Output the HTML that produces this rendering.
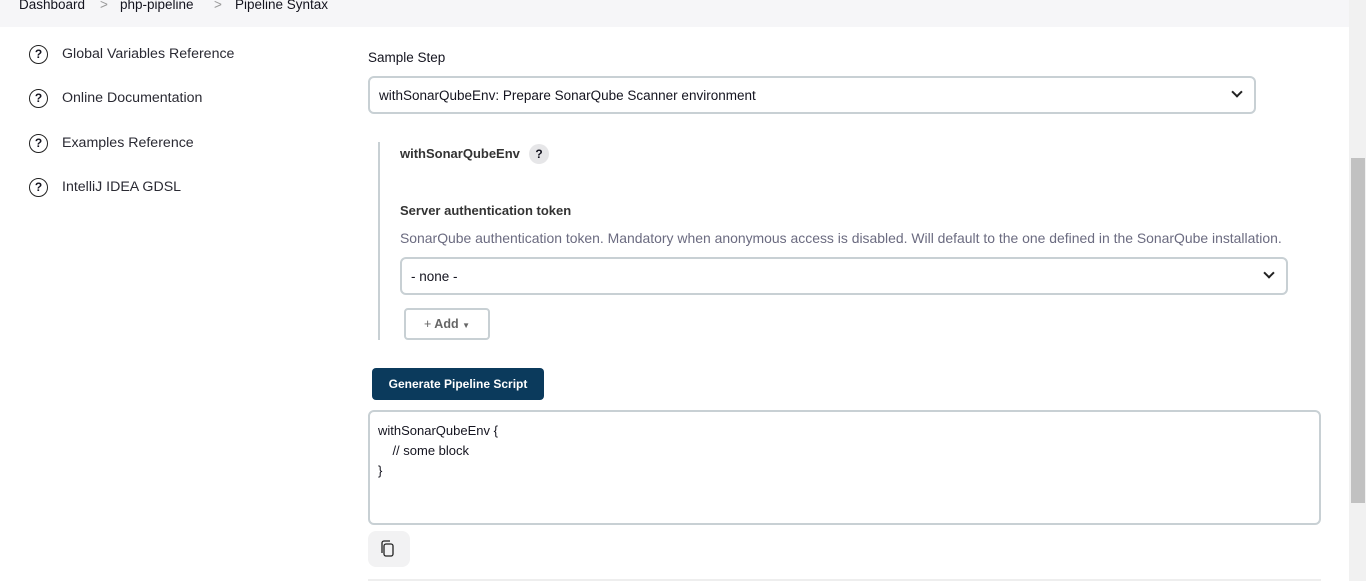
<!DOCTYPE html>
<html><head><meta charset="utf-8"><style>
*{box-sizing:border-box;margin:0;padding:0}
body{width:1366px;height:581px;overflow:hidden;background:#fff;font-family:"Liberation Sans",sans-serif;font-size:13.5px;color:#14141f;position:relative}
.bc{position:absolute;left:0;top:0;width:1349px;height:27px;background:#f6f6f8;font-size:13.5px}
.bc span{position:absolute;top:-3px}
.sep{color:#999}
.side{position:absolute;left:29px}
.side .q{position:absolute;left:0;top:0;width:19px;height:19px;border:1.7px solid #222;border-radius:50%;font-size:12px;font-weight:bold;text-align:center;line-height:16px}
.side .t{position:absolute;left:33px;top:1px;white-space:nowrap;color:#2a2a33;font-size:14.2px}
.abs{position:absolute;white-space:nowrap}
.sel{position:absolute;border:2px solid #c8d0d4;border-radius:6px;background:#fff}
.chev{position:absolute;width:8px;height:8px;border-right:2px solid #222;border-bottom:2px solid #222;transform:rotate(45deg)}
.sb{position:absolute;left:1349px;top:0;width:17px;height:581px;background:#f1f1f1}
.thumb{position:absolute;left:1351px;top:158px;width:14px;height:345px;background:#c1c1c1}
</style></head><body>
<div class="bc">
<span style="left:19px">Dashboard</span><span class="sep" style="left:100px">&gt;</span>
<span style="left:120px">php-pipeline</span><span class="sep" style="left:214px">&gt;</span>
<span style="left:235px">Pipeline Syntax</span>
</div>
<div class="side" style="top:45px"><div class="q">?</div><div class="t">Global Variables Reference</div></div>
<div class="side" style="top:89px"><div class="q">?</div><div class="t">Online Documentation</div></div>
<div class="side" style="top:134px"><div class="q">?</div><div class="t">Examples Reference</div></div>
<div class="side" style="top:178px"><div class="q">?</div><div class="t">IntelliJ IDEA GDSL</div></div>

<div class="abs" style="left:368px;top:50px">Sample Step</div>
<div class="sel" style="left:368px;top:76px;width:888px;height:38px"><div class="abs" style="left:9px;top:10px">withSonarQubeEnv: Prepare SonarQube Scanner environment</div><div class="chev" style="left:863px;top:10px"></div></div>

<div style="position:absolute;left:378px;top:142px;width:2px;height:198px;background:#c8d0d4"></div>
<div class="abs" style="left:400px;top:146px;font-weight:bold;color:#333;font-size:13px">withSonarQubeEnv</div>
<div class="abs" style="left:529px;top:144px;width:20px;height:20px;border-radius:50%;background:#e6e6e8;font-size:12px;font-weight:bold;text-align:center;line-height:20px">?</div>
<div class="abs" style="left:400px;top:203px;font-weight:bold;color:#333;font-size:13px">Server authentication token</div>
<div class="abs" style="left:400px;top:230px;color:#6b6b80;font-size:13.95px">SonarQube authentication token. Mandatory when anonymous access is disabled. Will default to the one defined in the SonarQube installation.</div>
<div class="sel" style="left:400px;top:257px;width:888px;height:38px"><div class="abs" style="left:9px;top:10px">- none -</div><div class="chev" style="left:863px;top:10px"></div></div>
<div class="abs" style="left:404px;top:308px;width:86px;height:32px;border:2px solid #c8d0d4;border-radius:4px;color:#666;font-weight:bold;font-size:12.5px;text-align:center;line-height:28px"><span style="font-weight:normal">+</span> Add <span style="font-size:8px">▼</span></div>

<div class="abs" style="left:372px;top:368px;width:172px;height:32px;background:#0b3a5c;border-radius:4px;color:#fff;font-weight:bold;font-size:12px;text-align:center;line-height:32px">Generate Pipeline Script</div>
<div class="sel" style="left:368px;top:410px;width:953px;height:115px">
<div class="abs" style="left:8px;top:9px;line-height:20px;font-size:13px">withSonarQubeEnv {<br>&nbsp;&nbsp;&nbsp;&nbsp;// some block<br>}</div>
</div>
<div class="abs" style="left:368px;top:531px;width:42px;height:36px;background:#f2f2f3;border-radius:8px">
<svg width="42" height="36" viewBox="0 0 42 36"><rect x="16" y="13" width="9" height="12" rx="2" fill="none" stroke="#222" stroke-width="1.3"/><path d="M14 22V12a2 2 0 0 1 2-2h6" fill="none" stroke="#222" stroke-width="1.3"/></svg>
</div>
<div style="position:absolute;left:368px;top:579px;width:953px;height:2px;background:#eee"></div>
<div class="sb"></div><div class="thumb"></div>
</body></html>
